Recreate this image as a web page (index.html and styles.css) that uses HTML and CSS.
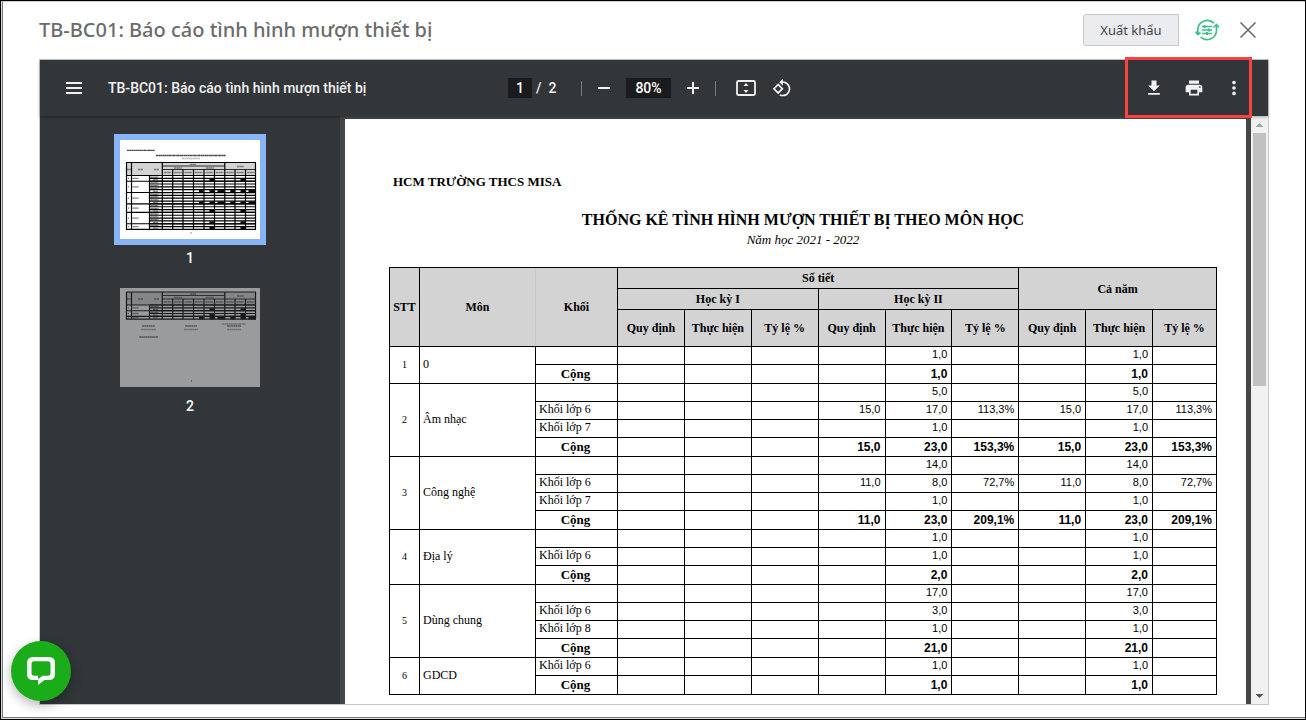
FILE: index.html
```
<!DOCTYPE html>
<html lang="vi">
<head>
    <meta charset="UTF-8">
    <meta name="viewport" content="width=device-width, initial-scale=1.0">
    <title>TB-BC01: Báo cáo tình hình mượn thiết bị</title>
    <link rel="stylesheet" href="styles.css">
</head>
<body>
    <div class="modal">
        <header class="modal-header">
            <h1>TB-BC01: Báo cáo tình hình mượn thiết bị</h1>
            <button class="btn-export" type="button">Xuất khẩu</button>
            <button class="btn-icon" type="button" aria-label="Tham số báo cáo">
                <svg width="24" height="24" viewBox="0 0 24 24" fill="none" stroke="#3dbf86" stroke-width="1.7">
                    <path d="M2.800 16V11A9.500 9.500 0 0 1 19 5.200M21.500 8v5A9.500 9.500 0 0 1 5.500 19"/>
                    <path d="M.5 13.500l2.300 3 2.700-2M18.500 9.500l3-3 2.300 3"/>
                    <path d="M7 8.500h10M7 12h10M7 15.500h10" stroke-width="1.300"/>
                    <path d="M9.500 7v3M14 10.500v3M12 14v3" stroke-width="2"/>
                </svg>
            </button>
            <button class="btn-icon btn-close" type="button" aria-label="Đóng">
                <svg width="16" height="16" viewBox="0 0 16 16" stroke="#666" stroke-width="1.5"><path d="M.5.5l15 15M15.500.5l-15 15"/></svg>
            </button>
        </header>

        <main class="viewer">
            <div class="toolbar">
                <div class="toolbar-start">
                    <button class="tool wide" type="button" aria-label="Menu">
                        <svg width="16" height="12" viewBox="0 0 16 12" fill="#f1f1f1"><path d="M0 0h16v2H0zM0 5h16v2H0zM0 10h16v2H0z"/></svg>
                    </button>
                    <span class="file-name">TB-BC01: Báo cáo tình hình mượn thiết bị</span>
                </div>
                <div class="toolbar-center">
                    <input class="page-input" type="text" value="1" aria-label="Trang">
                    <span class="page-count"><span>/</span><span>2</span></span>
                    <span class="separator"></span>
                    <button class="tool" type="button" aria-label="Thu nhỏ">
                        <svg width="12" height="12" viewBox="0 0 12 12" fill="#f1f1f1"><path d="M0 5h12v2H0z"/></svg>
                    </button>
                    <input class="zoom-input" type="text" value="80%" aria-label="Thu phóng">
                    <button class="tool" type="button" aria-label="Phóng to">
                        <svg width="12" height="12" viewBox="0 0 12 12" fill="#f1f1f1"><path d="M5 0h2v5h5v2H7v5H5V7H0V5h5z"/></svg>
                    </button>
                    <span class="separator"></span>
                    <button class="tool fit" type="button" aria-label="Vừa trang">
                        <svg width="20" height="16" viewBox="0 0 20 16" fill="none" stroke="#f1f1f1" stroke-width="1.8">
                            <rect x="1" y="1" width="18" height="14" rx="1.500"/>
                            <path d="M10 3l2.500 3h-5zM10 13l2.500-3h-5z" fill="#f1f1f1" stroke="none"/>
                        </svg>
                    </button>
                    <button class="tool" type="button" aria-label="Xoay">
                        <svg width="20" height="20" viewBox="0 0 24 24" fill="#f1f1f1"><path d="M7.340 6.410L.86 12.900l6.490 6.480 6.490-6.480-6.500-6.490zM3.690 12.900l3.660-3.660L11 12.900l-3.660 3.660-3.650-3.660zm15.670-6.260C17.610 4.880 15.300 4 13 4V.76L8.760 5 13 9.240V6c1.790 0 3.580.68 4.950 2.050 2.730 2.730 2.730 7.170 0 9.900C16.580 19.320 14.790 20 13 20c-.97 0-1.940-.21-2.840-.61l-1.490 1.490C10.020 21.620 11.510 22 13 22c2.300 0 4.610-.88 6.360-2.640 3.520-3.510 3.520-9.210 0-12.720z"/></svg>
                    </button>
                </div>
                <div class="toolbar-end">
                    <button class="tool wide" type="button" aria-label="Tải xuống">
                        <svg width="20" height="20" viewBox="0 0 24 24" fill="#f1f1f1"><path d="M19 9h-4V3H9v6H5l7 7 7-7zM5 18v2h14v-2H5z"/></svg>
                    </button>
                    <button class="tool wide" type="button" aria-label="In">
                        <svg width="20" height="20" viewBox="0 0 24 24" fill="#f1f1f1"><path d="M19 8H5c-1.660 0-3 1.340-3 3v6h4v4h12v-4h4v-6c0-1.660-1.340-3-3-3zm-3 11H8v-5h8v5zm3-7c-.55 0-1-.45-1-1s.45-1 1-1 1 .45 1 1-.45 1-1 1zm-1-9H6v4h12V3z"/></svg>
                    </button>
                    <button class="tool wide" type="button" aria-label="Khác">
                        <svg width="20" height="20" viewBox="0 0 24 24" fill="#f1f1f1"><circle cx="12" cy="5.500" r="2.200"/><circle cx="12" cy="12" r="2.200"/><circle cx="12" cy="18.500" r="2.200"/></svg>
                    </button>
                    <div class="highlight"></div>
                </div>
            </div>

            <div class="viewer-body">
                <aside class="sidebar">
                    <div class="thumb active">
                        <svg id="thumb1" viewBox="0 0 140 99"></svg>
                    </div>
                    <div class="thumb-label">1</div>
                    <div class="thumb dim">
                        <svg id="thumb2" viewBox="0 0 140 99"></svg>
                    </div>
                    <div class="thumb-label">2</div>
                </aside>

                <section class="canvas">
                    <article class="page">
                        <p class="school">HCM TRƯỜNG THCS MISA</p>
                        <h2>THỐNG KÊ TÌNH HÌNH MƯỢN THIẾT BỊ THEO MÔN HỌC</h2>
                        <p class="year">Năm học 2021 - 2022</p>
                        <table class="report">
                            <colgroup>
                                <col class="c-stt"><col class="c-mon"><col class="c-khoi">
                                <col><col><col><col><col><col><col><col><col class="c-last">
                            </colgroup>
                            <thead>
                                <tr class="h-top">
                                    <th rowspan="3">STT</th>
                                    <th rowspan="3" class="no-right">Môn</th>
                                    <th rowspan="3" class="no-left">Khối</th>
                                    <th colspan="6">Số tiết</th>
                                    <th colspan="3" rowspan="2">Cả năm</th>
                                </tr>
                                <tr class="h-top">
                                    <th colspan="3">Học kỳ I</th>
                                    <th colspan="3">Học kỳ II</th>
                                </tr>
                                <tr class="h-bottom">
                                    <th>Quy định</th><th>Thực hiện</th><th>Tỷ lệ %</th>
                                    <th>Quy định</th><th>Thực hiện</th><th>Tỷ lệ %</th>
                                    <th>Quy định</th><th>Thực hiện</th><th>Tỷ lệ %</th>
                                </tr>
                            </thead>
                            <tbody id="rows"></tbody>
                        </table>
                    </article>
                </section>

                <div class="scrollbar">
                    <span class="arrow up"></span>
                    <span class="handle"></span>
                    <span class="arrow down"></span>
                </div>
            </div>
        </main>
    </div>

    <button class="chat" type="button" aria-label="Chat">
        <svg width="28" height="28" viewBox="0 0 28 28">
            <path fill="#fff" fill-rule="evenodd" d="M6 0h16q6 0 6 6v11q0 6-6 6h-4.500L11 28v-5H6q-6 0-6-6V6q0-6 6-6zM7 4.300Q4.500 4.300 4.500 7v9q0 2.700 2.500 2.700h4v3.300l4.700-3.300H21q2.500 0 2.500-2.700V7q0-2.700-2.500-2.700z"/>
        </svg>
    </button>

    <script src="script.js"></script>
</body>
</html>
```
FILE: styles.css
```
* {
    box-sizing: border-box;
}
body {
    margin: 0;
    height: 100vh;
    padding: 0 0 1px 1px;
    border: 1px solid #000;
    background: #ddd;
    font-family: "Noto Sans", "Open Sans", sans-serif;
}
h1, h2, p {
    margin: 0;
}
button {
    padding: 0;
    border: none;
    background: none;
    cursor: pointer;
}
svg {
    display: block;
}
.modal {
    display: flex;
    flex-direction: column;
    height: 100%;
    padding: 0 36px 12px;
    border: 1px solid #777;
    border-top-color: #ccc;
    border-right: none;
    background: #fff;
}

/* header */
.modal-header {
    display: flex;
    align-items: center;
    flex: none;
    height: 57px;
    padding-bottom: 2px;
}
.modal-header h1 {
    flex: 1;
    font-size: 20px;
    font-weight: 500;
    line-height: 28px;
    color: #6b6b6b;
}
.btn-export {
    width: 96px;
    height: 32px;
    margin-right: 12px;
    border: 1px solid #c6c8cc;
    border-radius: 3px 0 0 3px;
    background: #ebecf0;
    color: #444;
    font-family: inherit;
    font-size: 13px;
}
.btn-icon {
    display: flex;
    align-items: center;
    justify-content: center;
    width: 32px;
    height: 32px;
}
.btn-close {
    margin: 0 5px 0 9px;
}

/* pdf viewer */
.viewer {
    display: flex;
    flex: 1;
    flex-direction: column;
    min-height: 0;
    border: 1px solid #c8c8c8;
}
.toolbar {
    position: relative;
    z-index: 1;
    display: grid;
    grid-template-columns: 1fr auto 1fr;
    flex: none;
    height: 56px;
    padding: 0 14px;
    background: #323639;
    box-shadow: 0 1px 3px rgba(0, 0, 0, 0.3);
    color: #f1f1f1;
    font-family: Roboto, sans-serif;
    font-size: 14px;
    font-weight: 500;
}
.toolbar-start, .toolbar-center, .toolbar-end {
    display: flex;
    align-items: center;
}
.toolbar-end {
    position: relative;
    justify-content: flex-end;
}
.tool {
    display: flex;
    align-items: center;
    justify-content: center;
    width: 36px;
    height: 36px;
}
.tool.wide {
    width: 40px;
}
.tool.fit {
    margin-left: 8px;
}
.file-name {
    margin-left: 14px;
    white-space: nowrap;
}
.page-input, .zoom-input {
    height: 20px;
    padding: 0;
    border: none;
    background: #191b1c;
    color: #fff;
    font-family: inherit;
    font-size: 14px;
    font-weight: 500;
    text-align: center;
}
.page-input {
    width: 24px;
}
.zoom-input {
    width: 45px;
    margin: 0 4px;
}
.page-count {
    display: flex;
    gap: 7px;
    width: 45px;
    padding-left: 4px;
}
.separator {
    width: 1px;
    height: 15px;
    margin: 0 4px;
    background: #777a7c;
}
.highlight {
    position: absolute;
    top: -3px;
    right: 2px;
    width: 127px;
    height: 61px;
    border: 3px solid #fa4242;
    pointer-events: none;
}
.viewer-body {
    display: flex;
    flex: 1;
    min-height: 0;
    background: #43474a;
}

/* thumbnails */
.sidebar {
    flex: none;
    width: 300px;
    padding-top: 24px;
    background: #323639;
    color: #fff;
    font-family: Roboto, sans-serif;
    font-size: 14px;
    font-weight: 500;
}
.thumb {
    width: 140px;
    margin: 0 auto;
    background: #fff;
}
.thumb.active {
    box-shadow: 0 0 0 6px #8ab4f8;
}
.thumb.dim {
    opacity: 0.5;
}
.thumb-label {
    margin: 11px 0 22px;
    line-height: 16px;
    text-align: center;
}

/* report page */
.canvas {
    flex: 1;
    min-width: 0;
    padding: 3px 5px 0;
    overflow: hidden;
}
.page {
    height: 700px;
    padding: 54px 29px 0 44px;
    background: #fff;
    color: #000;
    font-family: "Liberation Serif", serif;
}
.school {
    padding-left: 4px;
    font-size: 13px;
    font-weight: bold;
    line-height: 18px;
}
.page h2 {
    margin-top: 18px;
    font-size: 16px;
    line-height: 22px;
    text-align: center;
}
.year {
    margin-bottom: 18px;
    font-size: 13px;
    font-style: italic;
    line-height: 18px;
    text-align: center;
}
.report {
    width: 100%;
    table-layout: fixed;
    border-collapse: collapse;
    font-size: 12px;
    line-height: 16px;
}
.report th, .report td {
    padding: 0;
    border: 1px solid #000;
}
.report th {
    background: #d3d3d3;
}
.report .no-right {
    border-right: none;
}
.report .no-left {
    border-left: 1px solid #c8c8c8;
}
.c-stt {
    width: 30px;
}
.c-mon {
    width: 116px;
}
.c-khoi {
    width: 82px;
}
.c-last {
    width: 64px;
}
.h-top {
    height: 21px;
}
.h-bottom {
    height: 37px;
}
.row {
    height: 18px;
    line-height: 15px;
}
.report .row td {
    padding-bottom: 2px;
}
.row.total {
    height: 19px;
    line-height: 16px;
    font-weight: bold;
}
.report .total td {
    padding-bottom: 0;
}
.report .stt {
    font-size: 10px;
    font-weight: normal;
    text-align: center;
}
.report .mon {
    padding-left: 3px;
    font-size: 12px;
    font-weight: normal;
}
.report .khoi {
    padding-left: 3px;
}
.report .total .khoi {
    padding: 0 2px 0 0;
    font-size: 13px;
    text-align: center;
}
.report .num {
    padding-right: 4px;
    font-family: "Liberation Sans", Arial, sans-serif;
    font-size: 11px;
    text-align: right;
}
.report .total .num {
    font-size: 12px;
}

/* scrollbar */
.scrollbar {
    display: flex;
    flex-direction: column;
    align-items: center;
    flex: none;
    width: 17px;
    background: #f1f1f1;
}
.arrow {
    width: 8px;
    height: 4px;
    margin: 7px 0 6px;
    clip-path: polygon(50% 0, 100% 100%, 0 100%);
    background: #a3a3a3;
}
.arrow.down {
    margin-top: auto;
    clip-path: polygon(0 0, 100% 0, 50% 100%);
    background: #505050;
}
.handle {
    width: 13px;
    height: 43%;
    background: #c1c1c1;
}

/* live chat */
.chat {
    position: fixed;
    bottom: 19px;
    left: 11px;
    z-index: 2;
    display: flex;
    align-items: center;
    justify-content: center;
    width: 60px;
    height: 60px;
    border-radius: 50%;
    background: #1aac19;
    box-shadow: 0 4px 12px rgba(0, 0, 0, 0.3);
}
```
FILE: script.js
```
// each row: khối, học kỳ II (quy định, thực hiện, tỷ lệ); cả năm repeats học kỳ II
const subjects = [
    { name: "0", rows: [["", "", "1,0", ""], ["Cộng", "", "1,0", ""]] },
    { name: "Âm nhạc", rows: [
        ["", "", "5,0", ""],
        ["Khối lớp 6", "15,0", "17,0", "113,3%"],
        ["Khối lớp 7", "", "1,0", ""],
        ["Cộng", "15,0", "23,0", "153,3%"]
    ] },
    { name: "Công nghệ", rows: [
        ["", "", "14,0", ""],
        ["Khối lớp 6", "11,0", "8,0", "72,7%"],
        ["Khối lớp 7", "", "1,0", ""],
        ["Cộng", "11,0", "23,0", "209,1%"]
    ] },
    { name: "Địa lý", rows: [
        ["", "", "1,0", ""],
        ["Khối lớp 6", "", "1,0", ""],
        ["Cộng", "", "2,0", ""]
    ] },
    { name: "Dùng chung", rows: [
        ["", "", "17,0", ""],
        ["Khối lớp 6", "", "3,0", ""],
        ["Khối lớp 8", "", "1,0", ""],
        ["Cộng", "", "21,0", ""]
    ] },
    { name: "GDCD", rows: [["Khối lớp 6", "", "1,0", ""], ["Cộng", "", "1,0", ""]] }
];

let html = "";
subjects.forEach((subject, i) => {
    subject.rows.forEach((row, j) => {
        const values = row.slice(1);
        html += `<tr class="row${row[0] === "Cộng" ? " total" : ""}">`;
        if (j === 0) {
            html += `<td class="stt" rowspan="${subject.rows.length}">${i + 1}</td>`;
            html += `<td class="mon" rowspan="${subject.rows.length}">${subject.name}</td>`;
        }
        html += `<td class="khoi">${row[0]}</td>`;
        html += ["", "", "", ...values, ...values].map(v => `<td class="num">${v}</td>`).join("");
        html += "</tr>";
    });
});
document.getElementById("rows").innerHTML = html;

// small preview of the table for the sidebar
const cols = [6.5, 11.5, 29.5, 42.3, 52.7, 63, 73.5, 84, 94.5, 104.8, 115, 125.5, 135.5];

function line(x1, y1, x2, y2, w = 0.8) {
    return `<path d="M${x1} ${y1}L${x2} ${y2}" stroke="#000" stroke-width="${w}"/>`;
}

function smear(x, y, w, color = "#777") {
    return `<path d="M${x} ${y}h${w}" stroke="${color}" stroke-width="1.3" stroke-dasharray="2.3 .3 1.4 .2"/>`;
}

function preview(top, groups) {
    const head = top + 13;
    const rowHeight = 2.84;
    const count = groups.reduce((sum, g) => sum + g.length, 0);
    const bottom = head + count * rowHeight;
    let out = `<rect x="6.5" y="${top}" width="129" height="13" fill="#d3d3d3"/>`;
    out += line(6, top, 136, top, 1) + line(42.3, top + 3.5, 104.8, top + 3.5) + line(42.3, top + 7, 135.5, top + 7);
    out += smear(70, top + 2, 6) + smear(54, top + 5.5, 8) + smear(86, top + 5.5, 8) + smear(117, top + 4, 7);
    out += smear(7, top + 7, 4) + smear(18, top + 7, 5) + smear(34, top + 7, 5);
    cols.forEach((x, i) => {
        const start = i === 2 ? head : i > 3 && i < 12 && i !== 9 ? top + 7 : top;
        out += line(x, start, x, bottom, 1.2);
        if (i > 2 && i < 12) out += smear(x + 1.5, top + 10, 7.5);
    });
    let y = head;
    groups.forEach(group => {
        out += line(6, y, 136, y, 1.1);
        out += smear(8, y + group.length * rowHeight / 2, 1) + smear(12.5, y + group.length * rowHeight / 2, 6);
        group.forEach(kind => {
            out += line(29.5, y, 135.5, y, 1.2);
            out += smear(kind ? 33 : 30.5, y + 1.6, kind ? 5 : 8);
            const filled = kind === 2 ? [6, 7, 8, 9, 10, 11] : kind === 1 ? [7, 10] : [];
            filled.forEach(c => {
                const wide = c === 8 || c === 11;
                out += `<rect x="${cols[c] + (wide ? 3 : 5.5)}" y="${y + 0.4}" width="${wide ? 7 : 4.5}" height="2.5" fill="#000"/>`;
            });
            y += rowHeight;
        });
    });
    return out + line(6, bottom, 136, bottom, 1.2);
}

// 0 = plain row, 1 = total with two values, 2 = total with six values
document.getElementById("thumb1").innerHTML =
    smear(7, 10.3, 28, "#444") + smear(36, 15.5, 70, "#444") + smear(62, 18.5, 18, "#bbb") +
    preview(22.5, [[0, 1], [0, 0, 0, 2], [0, 0, 0, 2], [0, 0, 1], [0, 0, 0, 1], [0, 1]]) +
    smear(70.5, 93, 1);

document.getElementById("thumb2").innerHTML =
    preview(4, [[0, 1], [0, 1], [2]]) +
    smear(22, 38, 13) + smear(65, 38, 12) + smear(107, 38, 14) + smear(102, 36, 24, "#aaa") +
    smear(21, 41.5, 15, "#aaa") + smear(64, 41.5, 14, "#aaa") + smear(107, 41.5, 14, "#aaa") +
    smear(19, 49, 19) + smear(71, 93, 1);
```
